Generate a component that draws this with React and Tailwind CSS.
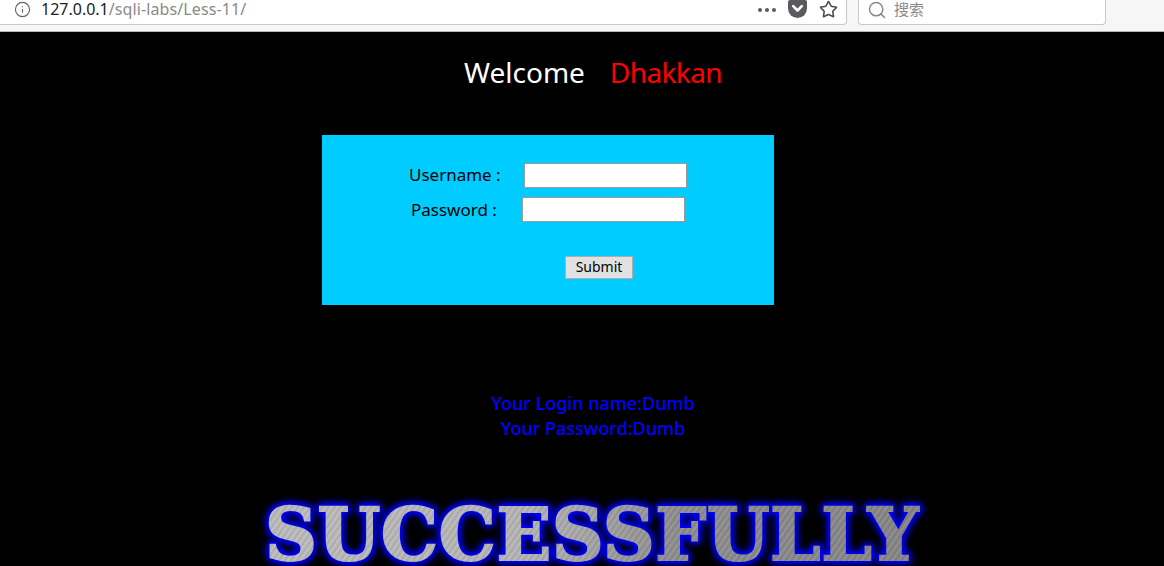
import React from "react";
import { Info, Search, Star } from "lucide-react";

const font = { fontFamily: '"Noto Sans", "Noto Sans CJK SC", sans-serif' };

function PocketIcon() {
    return (
        <svg viewBox="0 0 20 20" className="w-[19px] h-[19px]">
            <path d="M2 0h16a2 2 0 0 1 2 2v7a10 10 0 0 1-20 0V2a2 2 0 0 1 2-2z" fill="#5b5b5f" />
            <path d="M5.500 6.500 10 11l4.500-4.500" fill="none" stroke="#fff" strokeWidth="2.800" strokeLinecap="round" strokeLinejoin="round" />
        </svg>
    );
}

function Toolbar() {
    return (
        <div className="h-[32px] flex bg-[#f6f6f6] border-b border-[#b5b5b5]">
            <div className="w-[847px] h-[25px] flex items-center bg-white border-r border-b border-[#c8c8c8] rounded-br-sm pl-[14px] pb-[5px] pr-[8px]">
                <Info size={17} strokeWidth={1.6} className="text-[#666]" />
                <div className="ml-[10px] text-[16px] leading-[19px] text-[#8a8a8a]">
                    <span className="text-[#222]">127.0.0.1</span>
                    <span className="tracking-[0.1px]">/sqli-labs/Less-11/</span>
                </div>
                <div className="ml-auto flex items-center gap-[12px]">
                    <div className="flex gap-[3px]">
                        <span className="w-[4px] h-[4px] rounded-full bg-[#5b5b5f]" />
                        <span className="w-[4px] h-[4px] rounded-full bg-[#5b5b5f]" />
                        <span className="w-[4px] h-[4px] rounded-full bg-[#5b5b5f]" />
                    </div>
                    <PocketIcon />
                    <Star size={19} strokeWidth={2} className="text-[#4a4a4f]" />
                </div>
            </div>
            <div className="ml-[11px] w-[248px] h-[25px] flex items-center bg-white border-x border-b border-[#c8c8c8] rounded-b-sm pl-[8px] pb-[5px]">
                <Search size={20} strokeWidth={1.8} className="text-[#8a8a8a]" />
                <span className="ml-[7px] text-[15px] leading-[19px] text-[#8a8a8a]">搜索</span>
            </div>
        </div>
    );
}

function LoginBox() {
    return (
        <div className="ml-[322px] mt-[41px] w-[452px] h-[170px] bg-[#00ccff] text-[17px] text-black">
            <div className="pt-[28px] pl-[87px] flex items-center h-[52px]">
                <span className="w-[115px] leading-6">Username :</span>
                <input className="w-[163px] h-[25px] bg-white border border-[#9a9a9a]" />
            </div>
            <div className="mt-[10px] pl-[89px] flex items-center">
                <span className="w-[111px] leading-6">Password :</span>
                <input className="w-[163px] h-[25px] bg-white border border-[#9a9a9a]" />
            </div>
            <div className="mt-[31px] pl-[243px]">
                <button className="w-[68px] h-[23px] bg-[#e1e1e1] border border-[#adadad] text-[14px] leading-none text-black">
                    Submit
                </button>
            </div>
        </div>
    );
}

export default function App() {
    return (
        <div className="w-[1164px] h-[566px] overflow-hidden bg-black" style={font}>
            <Toolbar />

            <div className="pt-[20px] h-[62px] pl-[464px] flex text-[28px] leading-10 text-white">
                <span>Welcome</span>
                <span className="ml-[25px] text-[#ff0000] tracking-[-0.6px]">Dhakkan</span>
            </div>

            <LoginBox />

            {/* Result message */}
            <div className="mt-[86px] w-[1186px] text-center text-[#0000ff] font-medium text-[18px] leading-[25px]">
                <div>Your Login name:Dumb</div>
                <div>Your Password:Dumb</div>
            </div>

            {/* Banner */}
            <div className="mt-[63px] pl-[265px] [filter:drop-shadow(0_0_2px_#0000ff)_drop-shadow(0_0_3px_#0000ff)_drop-shadow(0_0_3px_#0000dd)]">
                <span
                    className="inline-block whitespace-nowrap text-[72px] leading-[62px] font-bold tracking-[0.5px] text-transparent bg-clip-text [-webkit-text-stroke:2px_transparent] [background-image:repeating-linear-gradient(125deg,rgba(255,255,255,0.06)_0px,rgba(255,255,255,0.06)_2px,rgba(0,0,0,0.06)_3px,rgba(0,0,0,0.06)_5px),linear-gradient(100deg,#bcbcbc_0%,#b5b5b5_40%,#8f8f8f_62%,#858585_100%)] [font-family:'DejaVu_Serif',serif]"
                >
                    SUCCESSFULLY
                </span>
            </div>
        </div>
    );
}
